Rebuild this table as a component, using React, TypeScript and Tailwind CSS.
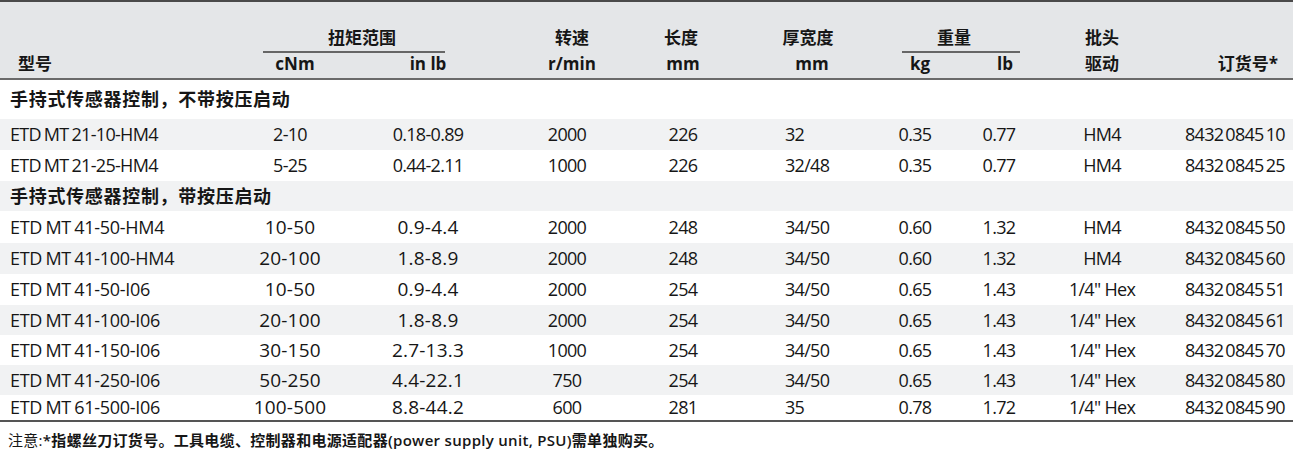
import React from "react";

type Row = {
  model: string;
  cnm: string;
  inlb: string;
  rpm: string;
  len: string;
  thick: string;
  kg: string;
  lb: string;
  drive: string;
  order: string;
  h: string;
  gray: boolean;
};

const rows1: Row[] = [
  { model: "ETD MT 21-10-HM4", cnm: "2-10", inlb: "0.18-0.89", rpm: "2000", len: "226", thick: "32", kg: "0.35", lb: "0.77", drive: "HM4", order: "8432 0845 10", h: "h-[31px]", gray: true },
  { model: "ETD MT 21-25-HM4", cnm: "5-25", inlb: "0.44-2.11", rpm: "1000", len: "226", thick: "32/48", kg: "0.35", lb: "0.77", drive: "HM4", order: "8432 0845 25", h: "h-[31px]", gray: false },
];

const rows2: Row[] = [
  { model: "ETD MT 41-50-HM4", cnm: "10-50", inlb: "0.9-4.4", rpm: "2000", len: "248", thick: "34/50", kg: "0.60", lb: "1.32", drive: "HM4", order: "8432 0845 50", h: "h-[32px]", gray: false },
  { model: "ETD MT 41-100-HM4", cnm: "20-100", inlb: "1.8-8.9", rpm: "2000", len: "248", thick: "34/50", kg: "0.60", lb: "1.32", drive: "HM4", order: "8432 0845 60", h: "h-[31px]", gray: true },
  { model: "ETD MT 41-50-I06", cnm: "10-50", inlb: "0.9-4.4", rpm: "2000", len: "254", thick: "34/50", kg: "0.65", lb: "1.43", drive: "1/4\" Hex", order: "8432 0845 51", h: "h-[31px]", gray: false },
  { model: "ETD MT 41-100-I06", cnm: "20-100", inlb: "1.8-8.9", rpm: "2000", len: "254", thick: "34/50", kg: "0.65", lb: "1.43", drive: "1/4\" Hex", order: "8432 0845 61", h: "h-[30px]", gray: true },
  { model: "ETD MT 41-150-I06", cnm: "30-150", inlb: "2.7-13.3", rpm: "1000", len: "254", thick: "34/50", kg: "0.65", lb: "1.43", drive: "1/4\" Hex", order: "8432 0845 70", h: "h-[30px]", gray: false },
  { model: "ETD MT 41-250-I06", cnm: "50-250", inlb: "4.4-22.1", rpm: "750", len: "254", thick: "34/50", kg: "0.65", lb: "1.43", drive: "1/4\" Hex", order: "8432 0845 80", h: "h-[30px]", gray: true },
  { model: "ETD MT 61-500-I06", cnm: "100-500", inlb: "8.8-44.2", rpm: "600", len: "281", thick: "35", kg: "0.78", lb: "1.72", drive: "1/4\" Hex", order: "8432 0845 90", h: "h-[25px]", gray: false },
];

function DataRow({ r, wide }: { r: Row; wide: boolean }) {
  const torque = wide ? "text-[19px] tracking-[0.2px]" : "";
  return (
    <div className={`flex items-center ${r.h} ${r.gray ? "bg-[#f1f2f3]" : "bg-white"} text-[18px] tracking-[-0.7px] text-[#161616]`}>
      <div className={`w-[230px] pl-[10px] whitespace-nowrap [word-spacing:-1px] ${wide ? "tracking-[-0.3px]" : ""}`}>{r.model}</div>
      <div className={`w-[120px] text-center ${torque}`}>{r.cnm}</div>
      <div className={`w-[156px] text-center ${torque}`}>{r.inlb}</div>
      <div className="w-[122px] text-center">{r.rpm}</div>
      <div className="w-[110px] text-center">{r.len}</div>
      <div className="w-[140px] pl-[47px]">{r.thick}</div>
      <div className="w-[74px] text-center">{r.kg}</div>
      <div className="w-[94px] text-center">{r.lb}</div>
      <div className="w-[112px] text-center whitespace-nowrap">{r.drive}</div>
      <div className="w-[135px] pl-[27px] whitespace-nowrap [word-spacing:-2px]">{r.order}</div>
    </div>
  );
}

function Section({ title, h, gray }: { title: string; h: string; gray: boolean }) {
  return (
    <div className={`flex items-center ${h} ${gray ? "bg-[#f1f2f3]" : "bg-white"} pl-[10px] text-[18px] font-bold tracking-[0.7px] text-[#161616]`}>
      {title}
    </div>
  );
}

export default function App() {
  return (
    <div className="w-[1293px] h-[456px] bg-white font-['Open_Sans','Noto_Sans_CJK_SC',sans-serif] overflow-hidden">
      <div className="border-t-2 border-[#4a4a4a]">
        {/* Header */}
        <div className="flex h-[78px] bg-[#e4e6e8] border-b-2 border-[#6a6a6a] items-end pb-[3px] text-[17px] font-bold text-[#161616]">
          <div className="w-[230px] pl-[18px] leading-[22px]">型号</div>
          <div className="w-[276px] flex flex-col">
            <div className="leading-[26px] text-center pr-[12px]">扭矩范围</div>
            <div className="h-[2px] bg-[#666] ml-[33px] mr-[61px]"></div>
            <div className="flex leading-[22px]">
              <div className="w-[120px] text-center pl-[10px]">cNm</div>
              <div className="w-[156px] text-center">in lb</div>
            </div>
          </div>
          <div className="w-[122px] flex flex-col text-center">
            <div className="leading-[26px] mb-[2px] pl-[10px]">转速</div>
            <div className="leading-[22px] pl-[10px]">r/min</div>
          </div>
          <div className="w-[110px] flex flex-col text-center">
            <div className="leading-[26px] mb-[2px] pr-[4px]">长度</div>
            <div className="leading-[22px]">mm</div>
          </div>
          <div className="w-[140px] flex flex-col text-center">
            <div className="leading-[26px] mb-[2px]">厚宽度</div>
            <div className="leading-[22px] pl-[8px]">mm</div>
          </div>
          <div className="w-[168px] flex flex-col">
            <div className="leading-[26px] text-center pr-[16px]">重量</div>
            <div className="h-[2px] bg-[#666] ml-[24px] mr-[26px]"></div>
            <div className="flex leading-[22px]">
              <div className="w-[74px] text-center pl-[10px]">kg</div>
              <div className="w-[94px] text-center pl-[12px]">lb</div>
            </div>
          </div>
          <div className="w-[112px] flex flex-col text-center">
            <div className="leading-[26px] mb-[2px]">批头</div>
            <div className="leading-[22px]">驱动</div>
          </div>
          <div className="w-[135px] text-right pr-[15px] leading-[22px]">订货号*</div>
        </div>

        <Section title="手持式传感器控制，不带按压启动" h="h-[39px]" gray={false} />
        {rows1.map((r) => (
          <DataRow key={r.model} r={r} wide={false} />
        ))}
        <Section title="手持式传感器控制，带按压启动" h="h-[30px]" gray={true} />
        {rows2.map((r) => (
          <DataRow key={r.model} r={r} wide={true} />
        ))}
        <div className="h-[2px] bg-[#555]"></div>
        <div className="pl-[8px] pt-[7px] text-[15px] tracking-[0.3px] text-[#161616] whitespace-nowrap">
          <span>注意:</span>
          <span className="font-semibold">*指螺丝刀订货号。工具电缆、控制器和电源适配器(power supply unit, PSU)需单独购买。</span>
        </div>
      </div>
    </div>
  );
}
